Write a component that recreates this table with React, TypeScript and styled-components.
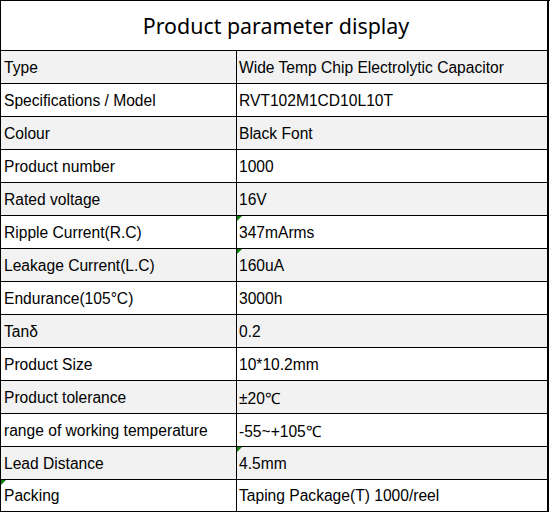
import React, { FC, ReactElement } from "react";
import styled, { createGlobalStyle } from "styled-components";

type Row = {
  label: string;
  value: string;
  markLabel?: boolean;
  markValue?: boolean;
};

const rows: Row[] = [
  { label: "Type", value: "Wide Temp Chip Electrolytic Capacitor" },
  { label: "Specifications / Model", value: "RVT102M1CD10L10T" },
  { label: "Colour", value: "Black Font" },
  { label: "Product number", value: "1000" },
  { label: "Rated voltage", value: "16V" },
  { label: "Ripple Current(R.C)", value: "347mArms", markValue: true },
  { label: "Leakage Current(L.C)", value: "160uA", markValue: true },
  { label: "Endurance(105°C)", value: "3000h" },
  { label: "Tanδ", value: "0.2" },
  { label: "Product Size", value: "10*10.2mm" },
  { label: "Product tolerance", value: "±20℃" },
  { label: "range of working temperature", value: "-55~+105℃" },
  { label: "Lead Distance", value: "4.5mm", markValue: true },
  { label: "Packing", value: "Taping Package(T) 1000/reel", markLabel: true },
];

const App: FC = (): ReactElement => {
  return (
    <>
      <GlobalStyle />
      <StyledSheet>
        <StyledTitle>Product parameter display</StyledTitle>
        {rows.map((row, i) => (
          <React.Fragment key={row.label}>
            <StyledCell $shaded={i % 2 === 0} $last={i === rows.length - 1}>
              {row.markLabel && <StyledMark />}
              {row.label}
            </StyledCell>
            <StyledCell
              $shaded={i % 2 === 0}
              $last={i === rows.length - 1}
              $value
            >
              {row.markValue && <StyledMark />}
              {row.value}
            </StyledCell>
          </React.Fragment>
        ))}
      </StyledSheet>
    </>
  );
};

export default App;

const GlobalStyle = createGlobalStyle`
  html, body {
    margin: 0;
    padding: 0;
    background: #fff;
  }
`;

const StyledSheet = styled.div`
  display: grid;
  grid-template-columns: 236px 312px;
  width: 550px;
  border-top: 1px solid #000;
  border-left: 1px solid #000;
  box-sizing: border-box;
`;

const StyledTitle = styled.div`
  grid-column: 1 / -1;
  height: 50px;
  box-sizing: border-box;
  display: flex;
  align-items: center;
  justify-content: center;
  padding: 0 0 1px 4px;
  border-right: 2px solid #000;
  border-bottom: 1px solid #000;
  font-family: "Noto Sans", "Open Sans", sans-serif;
  font-size: 21.4px;
  color: #000;
`;

const StyledCell = styled.div<{
  $shaded?: boolean;
  $last?: boolean;
  $value?: boolean;
}>`
  position: relative;
  height: ${(p) => (p.$last ? 32 : 33)}px;
  box-sizing: border-box;
  display: flex;
  align-items: center;
  padding: 1px 0 0 ${(p) => (p.$value ? 2 : 3)}px;
  background: ${(p) => (p.$shaded ? "#f2f2f2" : "#fff")};
  border-right: ${(p) => (p.$value ? 2 : 1)}px solid #000;
  border-bottom: 1px solid #000;
  font-family: "Liberation Sans", Arial, sans-serif;
  font-size: 15.6px;
  color: #000;
  white-space: nowrap;
`;

const StyledMark = styled.span`
  position: absolute;
  top: 0;
  left: 0;
  width: 0;
  height: 0;
  border-top: 5px solid #0a7d0a;
  border-right: 5px solid transparent;
`;
